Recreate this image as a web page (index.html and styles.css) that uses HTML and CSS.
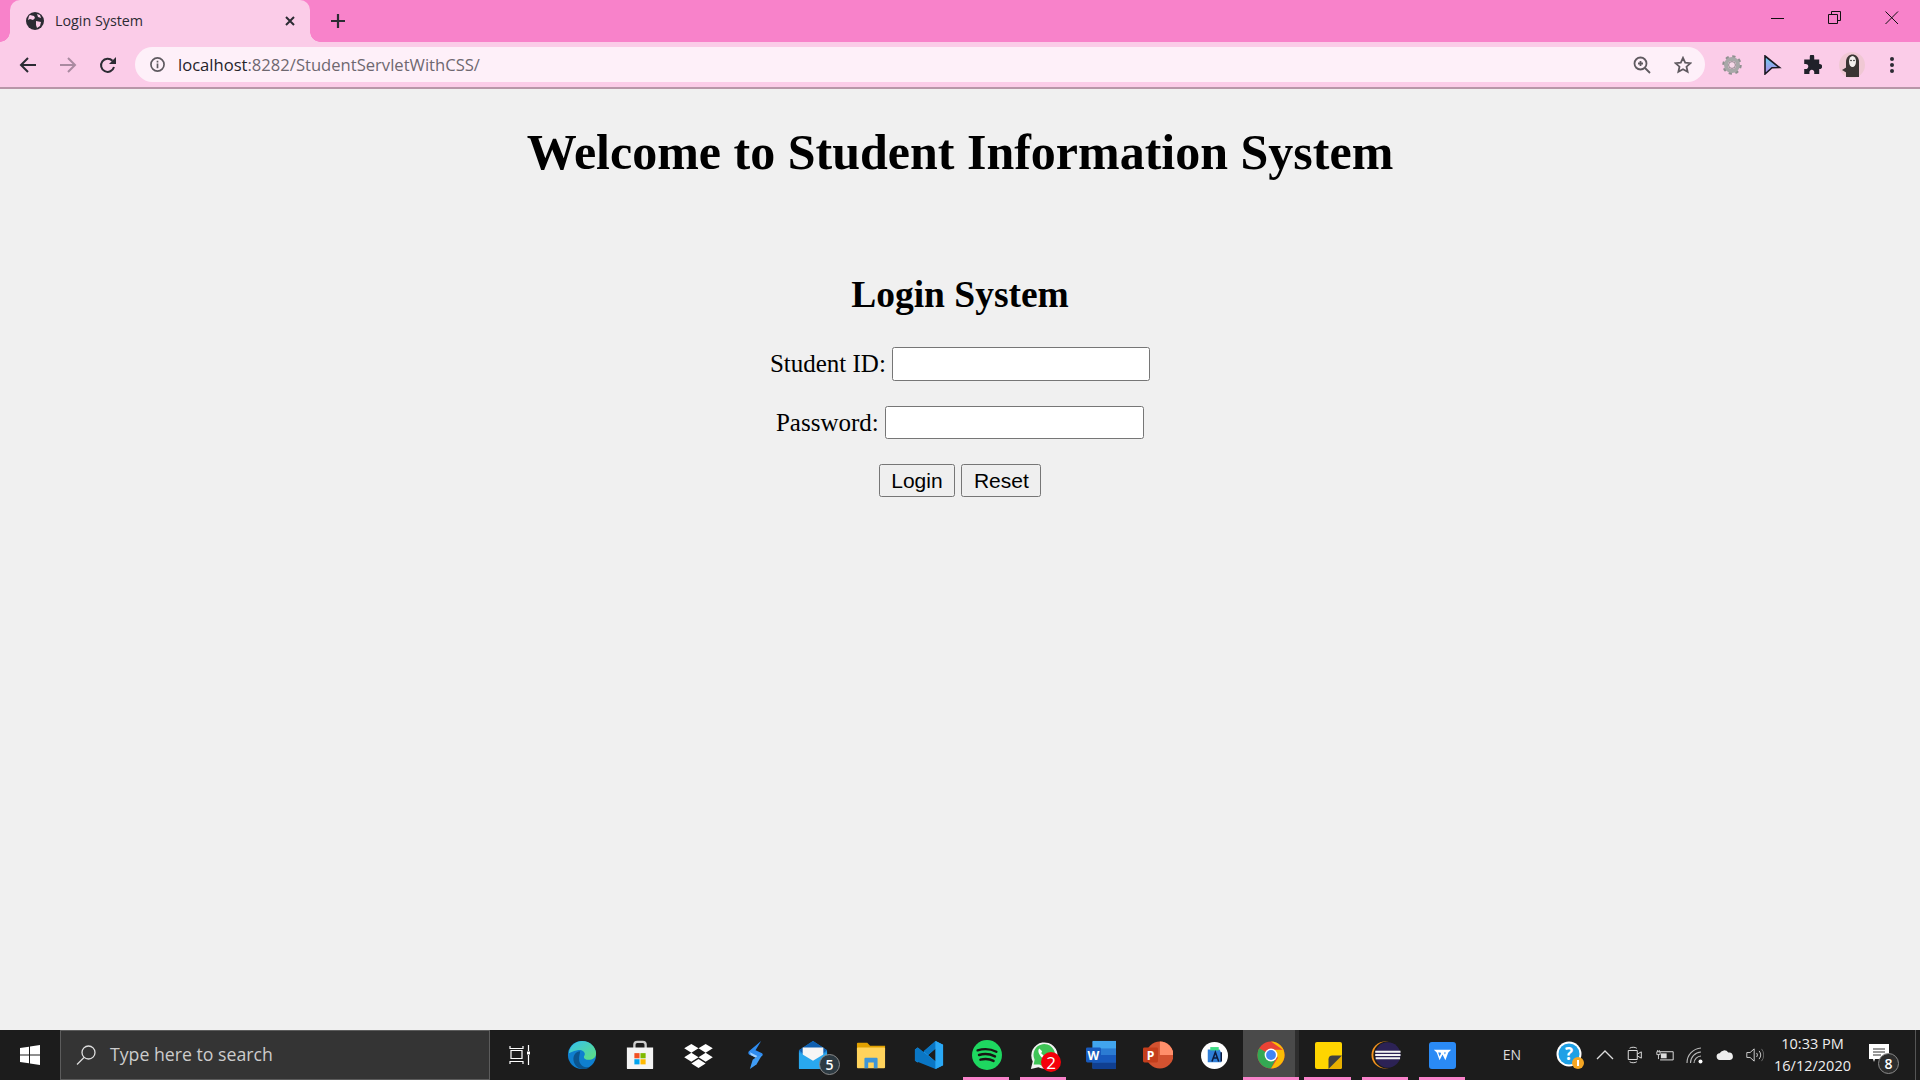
FILE: index.html
```html
<!DOCTYPE html>
<html lang="en">
<head>
<meta charset="utf-8">
<title>Login System</title>
<link rel="stylesheet" href="styles.css">
</head>
<body>
<div class="screen">
  <header class="chrome">
    <div class="tabstrip">
      <div class="tab">
        <svg class="tab-globe" viewBox="0 0 18 18"><circle cx="9" cy="9" r="9" fill="#2b2b33"/><path d="M4 3l4 1 1 2-2 2-3-1-2 1 1-4zM10 9l5 1-1 4-3 2-1-3zM11 2l3 1 1 3-3-1z" fill="#fbcce8"/></svg>
        <span class="tab-title">Login System</span>
        <svg class="tab-close" viewBox="0 0 10 10"><path d="M1 1l8 8M9 1l-8 8" stroke="#2b2b33" stroke-width="2"/></svg>
      </div>
      <div class="newtab"><svg viewBox="0 0 16 16"><path d="M8 1v14M1 8h14" stroke="#2b2b33" stroke-width="2.2"/></svg></div>
      <div class="winctl">
        <div class="winbtn"><svg viewBox="0 0 14 14"><path d="M0 7.5h13" stroke="#111" stroke-width="1"/></svg></div>
        <div class="winbtn"><svg viewBox="0 0 14 14"><path d="M.5 3.5h9v9h-9zM3.5 3.5v-3h9v9h-3" fill="none" stroke="#111" stroke-width="1"/></svg></div>
        <div class="winbtn"><svg viewBox="0 0 14 14"><path d="M.5.5l12.5 12.5M13 .5L.5 13" stroke="#111" stroke-width="1"/></svg></div>
      </div>
    </div>
    <div class="toolbar">
      <div class="tool"><svg viewBox="0 0 18 18"><path d="M17 9H2.5M9 2L2 9l7 7" fill="none" stroke="#2b2b33" stroke-width="2"/></svg></div>
      <div class="tool"><svg viewBox="0 0 18 18"><path d="M1 9h14.5M9 2l7 7-7 7" fill="none" stroke="#a98aa0" stroke-width="2"/></svg></div>
      <div class="tool"><svg viewBox="0 0 18 18"><path d="M15 11a6.6 6.6 0 1 1-1.500-6.200" fill="none" stroke="#2b2b33" stroke-width="2"/><path d="M17 1v7h-7z" fill="#2b2b33"/></svg></div>
      <div class="omnibox">
        <svg class="info" viewBox="0 0 16 16"><circle cx="8" cy="8" r="7" fill="none" stroke="#5f5a60" stroke-width="1.800"/><path d="M8 7v5M8 4v1.800" stroke="#5f5a60" stroke-width="1.800"/></svg>
        <span class="url"><span class="host">localhost</span>:8282/StudentServletWithCSS/</span>
        <div class="omni-end">
          <svg class="omni-icon" viewBox="0 0 18 18"><circle cx="7.500" cy="7.500" r="6" fill="none" stroke="#5f5a60" stroke-width="1.800"/><path d="M12 12l5 5M7.500 5v5M5 7.500h5" stroke="#5f5a60" stroke-width="1.800"/></svg>
          <svg class="omni-icon" viewBox="0 0 18 18"><path d="M9 1.800l2.200 4.800 5.200.6-3.900 3.500 1.100 5.100L9 13.200l-4.600 2.600 1.100-5.100L1.600 7.200l5.200-.6z" fill="none" stroke="#5f5a60" stroke-width="1.800"/></svg>
        </div>
      </div>
      <div class="tool ext-first"><svg class="ext" viewBox="0 0 20 20"><circle cx="10" cy="10" r="8" fill="none" stroke="#8f8f8f" stroke-width="3.500" stroke-dasharray="3 3.280"/><circle cx="10" cy="10" r="6" fill="none" stroke="#a8a8a8" stroke-width="4"/><circle cx="10" cy="10" r="3.400" fill="#f6d7e8" stroke="#777" stroke-width=".8"/></svg></div>
      <div class="tool"><svg class="ext" viewBox="0 0 18 20"><defs><linearGradient id="arrowFill" x1="0" y1="0" x2="0" y2="1"><stop offset="0" stop-color="#66d3ee"/><stop offset="1" stop-color="#b486ea"/></linearGradient></defs><path d="M2 1l14.500 11.500-7.500.2L2 19z" fill="url(#arrowFill)" stroke="#1a1a22" stroke-width="1.600"/></svg></div>
      <div class="tool"><svg class="ext" viewBox="0 0 18 18"><path d="M7 1.500a2 2 0 0 1 4 0V4h4.500v4.200a2.200 2.200 0 1 1 0 4.300V17H11v-1a2.200 2.200 0 1 0-4.300 0v1H2v-4.500h1a2.200 2.200 0 1 0 0-4.300H2V4h5z" fill="#20212a"/></svg></div>
      <div class="tool"><svg class="avatar" viewBox="0 0 26 26"><circle cx="13" cy="13" r="13" fill="#f0c8d4"/><path d="M7 25V10c0-10 13-10 13 0v15z" fill="#3a3533"/><path d="M3 18l5-3v6z" fill="#3a3533"/><ellipse cx="13.500" cy="9.500" rx="3.500" ry="5.500" fill="#f4f0ee"/><circle cx="12" cy="8.500" r=".8" fill="#222"/><circle cx="15" cy="8.500" r=".8" fill="#222"/></svg></div>
      <div class="tool"><svg viewBox="0 0 18 18"><circle cx="9" cy="3" r="2" fill="#2b2b33"/><circle cx="9" cy="9" r="2" fill="#2b2b33"/><circle cx="9" cy="15" r="2" fill="#2b2b33"/></svg></div>
    </div>
  </header>

  <main class="page">
    <h1 class="page-title">Welcome to Student Information System</h1>
    <h2 class="login-title">Login System</h2>
    <form class="login-form">
      <p class="row"><label>Student ID: <input class="field field-id" type="text"></label></p>
      <p class="row row-pw"><label>Password: <input class="field field-pw" type="password"></label></p>
      <p class="row row-buttons"><button type="button" class="btn">Login</button> <button type="button" class="btn">Reset</button></p>
    </form>
  </main>

  <footer class="taskbar">
    <div class="start"><svg viewBox="0 0 20 20"><path d="M0 3l9-1.300V9.500H0zM10 1.500L20 0v9.500H10zM0 10.500h9v7.800L0 17zM10 10.500h10V20l-10-1.500z" fill="#fff"/></svg></div>
    <div class="search">
      <svg class="search-icon" viewBox="0 0 20 20"><circle cx="12.500" cy="7.500" r="6.500" fill="none" stroke="#ddd" stroke-width="1.300"/><path d="M8 12.500L1 19.500" stroke="#ddd" stroke-width="1.300"/></svg>
      <span>Type here to search</span>
    </div>
    <div class="taskview"><svg viewBox="0 0 22 20"><path d="M1 1v2.500h13V1M2 5.500h11v8H2zM1 19v-2.500h13V19" fill="none" stroke="#fff" stroke-width="1.200"/><path d="M19.500 0v6M19.500 10v10" stroke="#fff" stroke-width="1.200"/><rect x="18" y="6.500" width="3" height="3" fill="#fff"/></svg></div>
    <div class="apps">
      <div class="app"><svg viewBox="0 0 32 32"><defs><linearGradient id="edgeA" x1="0" y1="0" x2="1" y2="1"><stop offset="0" stop-color="#35c1f1"/><stop offset="1" stop-color="#5fe07c"/></linearGradient></defs><circle cx="16" cy="16" r="15" fill="#0f7fcf"/><path d="M2 14C3 5 10 1 16 1c9 0 15 7 15 13 0 5-4 7-8 7-3 0-5-1-5-3 0-1 1-1 1-3 0-3-4-5-8-4-5 1-8 3-9 3z" fill="url(#edgeA)"/><path d="M14 12c-4 0-8 4-7 10 1 5 5 9 11 9 3 0 5-1 6-2-5 1-10-2-11-7-.6-4 1-8 1-10z" fill="#0b558f"/></svg></div>
      <div class="app"><svg viewBox="0 0 32 32"><path d="M10 9V5a3 3 0 0 1 3-3h6a3 3 0 0 1 3 3v4" fill="none" stroke="#ccc" stroke-width="2.500"/><path d="M2 8h28v22a1 1 0 0 1-1 1H3a1 1 0 0 1-1-1z" fill="#f4f4f4"/><rect x="10" y="14" width="5.500" height="5.500" fill="#f25022"/><rect x="16.500" y="14" width="5.500" height="5.500" fill="#7fba00"/><rect x="10" y="20.500" width="5.500" height="5.500" fill="#00a4ef"/><rect x="16.500" y="20.500" width="5.500" height="5.500" fill="#ffb900"/></svg></div>
      <div class="app"><svg class="i-dropbox" viewBox="0 0 32 28"><path d="M8 1l8 5-8 5-8-5zM24 1l8 5-8 5-8-5zM8 11l8 5-8 5-8-5zM24 11l8 5-8 5-8-5zM16 18l8 5-8 5-8-5z" fill="#fff"/></svg></div>
      <div class="app"><svg class="i-bolt" viewBox="0 0 16 30"><path d="M14 0L1 11c-1 1-1 3 1 4l8 3 5-2c1-1 1-2 0-3L8 10z" fill="#2f8cf0"/><path d="M15 15L9 25 2 30l3-10 4-3z" fill="#3f9cf5"/><path d="M2 12l8 4-2 2-5-3z" fill="#9fd0ff"/></svg></div>
      <div class="app"><svg viewBox="0 0 32 32"><path d="M1 11L16 1l15 10v19a1 1 0 0 1-1 1H2a1 1 0 0 1-1-1z" fill="#1d8fe0"/><path d="M1 11L16 1l15 10-4 3H5z" fill="#0f5fb0"/><path d="M5 8h22v9l-11 6-11-6z" fill="#f5f5f5"/><path d="M1 13l15 9 15-9v17a1 1 0 0 1-1 1H2a1 1 0 0 1-1-1z" fill="#29a8ee"/></svg><span class="badge badge-mail">5</span></div>
      <div class="app"><svg viewBox="0 0 32 30"><path d="M1 3a1 1 0 0 1 1-1h10l3 3h16v6H1z" fill="#e0a000"/><rect x="1" y="7" width="30" height="22" rx="1" fill="#ffd35c"/><path d="M9 29v-10a1 1 0 0 1 1-1h12a1 1 0 0 1 1 1v10h-4v-6h-6v6z" fill="#3c95d8"/></svg></div>
      <div class="app"><svg viewBox="0 0 32 32"><path d="M23 1l8 4v22l-8 4-13-12-6 5-3-2v-12l3-2 6 5zM23 9l-8 7 8 7z" fill="#1f9cf0"/><path d="M23 1v8l-8 7-5-4zM1 10l3-2 19 15v8L1 22z" fill="#0a76c4"/><path d="M23 1l8 4v22l-8 4z" fill="#2aa8f5"/></svg></div>
      <div class="app on"><svg viewBox="0 0 32 32"><circle cx="16" cy="16" r="16" fill="#1ed760"/><path d="M6 11c7-2 14-1.500 20 1.500M7.500 16c6-1.700 12-1 17 1.500M9 21c5-1.300 10-.8 14 1.300" fill="none" stroke="#191414" stroke-width="2.600" stroke-linecap="round"/></svg></div>
      <div class="app on"><svg viewBox="0 0 32 32"><path d="M2 31l2-8a14 14 0 1 1 6 6z" fill="#f2f2f2"/><path d="M5 26l1-5a11.500 11.500 0 1 1 5 5z" fill="#3fc456"/><path d="M11 9c-2 2-1 6 3 10s8 4 9 2l-3-3-2 1-5-5 1-2z" fill="#fff"/></svg><span class="badge badge-red">2</span></div>
      <div class="app"><svg viewBox="0 0 32 30"><rect x="7" y="0" width="25" height="30" rx="1.500" fill="#2b7cd3"/><rect x="7" y="0" width="25" height="8" fill="#41a5ee"/><rect x="7" y="15" width="25" height="8" fill="#185abd"/><rect x="7" y="23" width="25" height="7" fill="#103f91"/><rect x="0" y="7" width="16" height="16" rx="1.500" fill="#185abd"/><text x="8" y="20" class="svg-letter">W</text></svg></div>
      <div class="app"><svg viewBox="0 0 32 30"><circle cx="18" cy="15" r="14.500" fill="#d35230"/><path d="M18 .5A14.500 14.500 0 0 1 32.500 15H18z" fill="#ff8f6b"/><rect x="0" y="7" width="16" height="16" rx="1.500" fill="#c43e1c"/><text x="8" y="20" class="svg-letter">P</text></svg></div>
      <div class="app"><svg class="i-small" viewBox="0 0 32 32"><circle cx="16" cy="16" r="16" fill="#fff"/><path d="M8 9h14l2 4v11H8z" fill="#2f7fd8"/><path d="M11 6h10v4H11z" fill="#3ddc84"/><path d="M13 23l4-11 4 11M15 19h4M24 12v11" fill="none" stroke="#0d1b3e" stroke-width="1.800"/></svg></div>
      <div class="app active"><svg class="i-chrome" viewBox="0 0 32 32"><circle cx="16" cy="16" r="15.500" fill="#ea4335"/><path d="M16 16L2.500 8.300A15.500 15.500 0 0 0 16 31.500l7-14z" fill="#34a853"/><path d="M16 .5A15.500 15.500 0 0 1 31.500 16c0 8.500-7 15.500-15.500 15.500L24 19l-8-9h13.500z" fill="#fbbc05"/><circle cx="16" cy="16" r="7.300" fill="#fff"/><circle cx="16" cy="16" r="5.600" fill="#4285f4"/></svg></div>
      <div class="app on"><svg class="i-small" viewBox="0 0 28 28"><rect width="28" height="28" rx="2" fill="#ffd500"/><path d="M14 28l14-14v12a2 2 0 0 1-2 2z" fill="#e8b000"/><path d="M14 28v-10a4 4 0 0 1 4-4h10z" fill="#40403e"/></svg></div>
      <div class="app on"><svg viewBox="0 0 32 32"><circle cx="15" cy="16" r="14.500" fill="#f7941e"/><circle cx="17" cy="16" r="14.500" fill="#1c1c1c"/><circle cx="18" cy="16" r="13.500" fill="#2c2255"/><path d="M4.500 12.500h27M4.500 16h27M5 19.500h26" stroke="#f4f4f4" stroke-width="2"/></svg></div>
      <div class="app on"><svg class="i-small" viewBox="0 0 28 28"><rect width="28" height="28" rx="3" fill="#2a8af5"/><path d="M5 8h18l-3 3-3 8-3-6-3 6-3-8zM9.500 11l1.500 4 1.500-3-.7-1zM15.500 11l1 2 1-2z" fill="#fff" fill-rule="evenodd"/></svg></div>
    </div>
    <div class="tray">
      <div class="lang">EN</div>
      <div class="tray-item help"><svg viewBox="0 0 28 28"><circle cx="13" cy="13" r="12.500" fill="#fff"/><circle cx="13" cy="13" r="10.500" fill="#1ea0e6"/><text x="13" y="19" class="svg-help">?</text><circle cx="22" cy="22" r="6" fill="#f5a623"/><rect x="21" y="19" width="2" height="6" fill="#fff"/></svg></div>
      <div class="tray-item"><svg viewBox="0 0 18 18"><path d="M1 13l8-8 8 8" fill="none" stroke="#ddd" stroke-width="1.300"/></svg></div>
      <div class="tray-item"><svg viewBox="0 0 18 20"><path d="M1.500 5h10v10h-10zM11.500 9l4.500-2.500v7L11.500 11M3 2.500c2-1.500 6-1.500 8 0M3 17.500c2 1.500 6 1.500 8 0" fill="none" stroke="#ddd" stroke-width="1.100"/></svg></div>
      <div class="tray-item"><svg viewBox="0 0 22 14"><path d="M5 3h16v10H5" fill="none" stroke="#ddd" stroke-width="1.200"/><rect x="6" y="5" width="7" height="6" fill="#ddd"/><path d="M1 3h4v3.500H1zM2 1v2M4 1v2M3 6.500V12" fill="none" stroke="#ddd" stroke-width="1.100"/></svg></div>
      <div class="tray-item"><svg viewBox="0 0 18 18"><path d="M1 17A15 15 0 0 1 15 2M4.500 17A11 11 0 0 1 15 6M8 17A7.500 7.500 0 0 1 15 10" fill="none" stroke="#bbb" stroke-width="1.100"/><circle cx="14.500" cy="15.500" r="2" fill="#fff"/></svg></div>
      <div class="tray-item"><svg viewBox="0 0 22 14"><path d="M5 13a4 4 0 0 1-.5-8A6 6 0 0 1 15 4a4.500 4.500 0 0 1 2 9z" fill="#eee"/></svg></div>
      <div class="tray-item"><svg viewBox="0 0 22 18"><path d="M1 6h4l5-4.500v15L5 12H1z" fill="none" stroke="#ddd" stroke-width="1.100"/><path d="M13 6.500a4 4 0 0 1 0 5M16 4a8 8 0 0 1 0 10" fill="none" stroke="#ddd" stroke-width="1.100"/><path d="M19 1.500a12 12 0 0 1 0 15" fill="none" stroke="#777" stroke-width="1"/></svg></div>
      <div class="clock"><span>10:33 PM</span><span>16/12/2020</span></div>
      <div class="notif"><svg viewBox="0 0 20 18"><path d="M0 0h20v15H6l-1 3-1-3H0z" fill="#fff"/><path d="M4 5h12M4 8h12M4 11h8" stroke="#333" stroke-width="1.100"/></svg><span class="badge badge-notif">8</span></div>
      <div class="desktop-edge"></div>
    </div>
  </footer>
</div>
</body>
</html>
```

FILE: styles.css
```css
* { box-sizing: border-box; }
html, body { margin: 0; height: 100%; overflow: hidden; }
svg { display: block; }

.screen { display: flex; flex-direction: column; height: 1080px; background: #f0f0f0; }

/* Browser frame */
.chrome { flex: none; }
.tabstrip { display: flex; align-items: stretch; height: 42px; padding-left: 10px; background: #f882ca; }
.tab { position: relative; display: flex; align-items: center; width: 300px; padding: 0 15px 0 16px; background: #fbcce8; border-radius: 10px 10px 0 0; }
.tab::before, .tab::after { content: ""; position: absolute; bottom: 0; width: 10px; height: 10px; }
.tab::before { left: -10px; background: radial-gradient(circle at 0 0, #f882ca 9.500px, #fbcce8 10px); }
.tab::after { right: -10px; background: radial-gradient(circle at 100% 0, #f882ca 9.500px, #fbcce8 10px); }
.tab-globe { width: 18px; height: 18px; margin-right: 11px; }
.tab-title { flex: 1; font: 14.300px/1 "Open Sans", sans-serif; color: #2b2b33; }
.tab-close { width: 10px; height: 10px; }
.newtab { display: flex; align-items: center; justify-content: center; width: 44px; margin-left: 6px; }
.newtab svg { width: 16px; height: 16px; }
.winctl { display: flex; margin-left: auto; }
.winbtn { display: flex; align-items: center; justify-content: center; width: 57px; height: 36px; }
.winbtn svg { width: 14px; height: 14px; }

.toolbar { display: flex; align-items: center; height: 47px; padding: 0 8px; background: #fbcce8; border-bottom: 2px solid #b896a8; }
.tool { display: flex; align-items: center; justify-content: center; flex: none; width: 40px; height: 36px; }
.tool svg { width: 18px; height: 18px; }
.tool .ext { width: 20px; height: 20px; }
.tool .avatar { width: 26px; height: 26px; }
.ext-first { margin-left: 7px; }
.omnibox { display: flex; align-items: center; flex: 1; height: 35px; margin-left: 7px; padding: 0 13px 0 15px; background: #fef0f9; border-radius: 18px; }
.info { width: 15px; height: 15px; margin-right: 13px; }
.url { padding-top: 2px; font: 16.600px/1 "Open Sans", sans-serif; color: #6e6870; }
.host { color: #25232a; }
.omni-end { display: flex; gap: 23px; margin-left: auto; }
.omni-icon { width: 18px; height: 18px; }

/* Page */
.page { flex: 1; min-height: 0; text-align: center; font-family: "Liberation Serif", serif; color: #000; }
.page-title { margin: 26px 0 0; font-size: 50px; line-height: 74px; font-weight: 700; }
.login-title { margin: 83px 0 0; font-size: 37.500px; line-height: 46px; font-weight: 700; }
.login-form { margin-top: 29px; }
.row { display: block; margin: 0 0 25px; font-size: 25px; line-height: 33px; height: 34px; }
.row-pw { height: 33px; }
.field { height: 34px; padding: 0 2px; background: #fff; border: 1.500px solid #767676; border-radius: 2.500px; vertical-align: top; }
.field-id { width: 258px; }
.field-pw { width: 259px; height: 33px; }
.btn { height: 33px; padding: 0 11.500px; font: 21px/1 "Liberation Sans", sans-serif; color: #000; background: #efefef; border: 1.500px solid #767676; border-radius: 2.500px; vertical-align: top; }

/* Taskbar */
.taskbar { display: flex; flex: none; height: 50px; background: #1c1c1c; color: #fff; }
.start { display: flex; align-items: center; justify-content: center; flex: none; width: 60px; }
.start svg { width: 20px; height: 20px; }
.search { display: flex; align-items: center; flex: none; width: 430px; padding-left: 15px; background: #343434; border: 1px solid #5c5c5c; font: 17.700px/1 "Open Sans", sans-serif; color: #ccc; }
.search-icon { width: 20px; height: 20px; margin-right: 14px; }
.taskview { display: flex; align-items: center; justify-content: center; flex: none; width: 63px; padding-right: 3px; }
.taskview svg { width: 22px; height: 20px; }
.apps { display: grid; grid-template-columns: 57px 59px 58px 57.500px 57.500px 58.500px 57.500px 57px 57px 57px 57px 57px 56px 58px 57px 57px; flex: none; }
.app { position: relative; display: flex; align-items: center; justify-content: center; height: 50px; }
.app svg { width: 30px; height: 30px; }
.app .i-small { width: 27px; height: 27px; }
.app .i-chrome { width: 28px; height: 28px; }
.app .i-dropbox { width: 29px; height: 25px; }
.app .i-bolt { width: 15px; height: 30px; }
.app.on::after { content: ""; position: absolute; left: 5px; right: 6px; bottom: 0; height: 3px; background: #f882ca; }
.app.active { background: linear-gradient(to right, #4a4a4a 52px, #2e2e2e 52px); }
.app.active::after { content: ""; position: absolute; left: 0; right: 0; bottom: 0; height: 3px; background: #f882ca; }
.badge { position: absolute; display: flex; align-items: center; justify-content: center; border-radius: 50%; font: 600 14px/1 "Open Sans", sans-serif; color: #fff; }
.badge-mail { right: 2px; bottom: 5px; width: 21px; height: 21px; background: #2d3a42; border: 1px solid #8a8a8a; }
.badge-red { right: 11px; bottom: 8px; width: 20px; height: 20px; font-weight: 400; font-size: 17px; background: #f5000a; }
.badge-notif { right: 16px; bottom: 6px; width: 21px; height: 21px; background: #2d2d2d; border: 1px solid #8a8a8a; }
.svg-letter { font: 700 13px "Open Sans", sans-serif; fill: #fff; text-anchor: middle; }
.svg-help { font: 700 17px "Open Sans", sans-serif; fill: #fff; text-anchor: middle; }

.tray { display: flex; margin-left: auto; align-items: center; }
.lang { width: 44px; margin-right: 21px; text-align: center; font: 14px/1 "Open Sans", sans-serif; color: #ddd; }
.tray-item { display: flex; align-items: center; justify-content: center; flex: none; width: 30px; height: 50px; }
.tray-item svg { width: 18px; height: 18px; }
.help { margin-right: 5px; }
.tray-item.help svg { width: 28px; height: 28px; }
.clock { display: flex; flex-direction: column; align-items: center; gap: 7px; width: 85px; font: 14.500px/1 "Open Sans", sans-serif; color: #eee; }
.notif { position: relative; display: flex; align-items: center; justify-content: center; flex: none; width: 60px; height: 50px; padding-right: 12px; }
.notif svg { width: 20px; height: 18px; margin-top: -4px; }
.desktop-edge { width: 5px; height: 50px; border-left: 1px solid #555; }
```
